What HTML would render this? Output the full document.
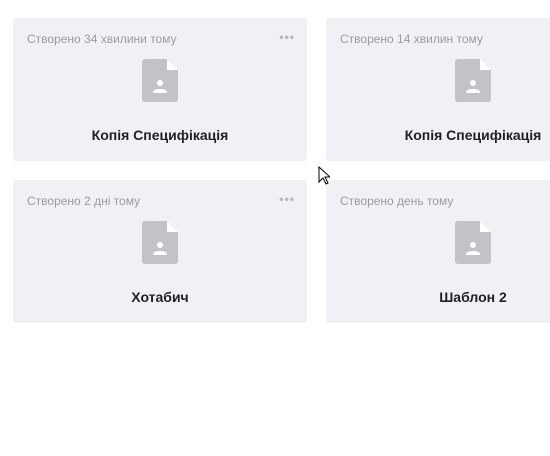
<!DOCTYPE html>
<html><head><meta charset="utf-8"><style>
body{margin:0;width:550px;height:456px;background:#fff;overflow:hidden;position:relative;font-family:"Liberation Sans",sans-serif}
.c{position:absolute;width:294px;height:143px;background:#f0f1f5;border-radius:3px}
.t{position:absolute;left:14px;top:14px;font-size:12px;color:#9a9ca3}
.d{position:absolute;right:12px;top:12px;font-size:12px;color:#b5b7bd;letter-spacing:1px;font-weight:bold}
.i{position:absolute;left:129px;top:41px}
.n{position:absolute;left:0;right:0;top:109px;text-align:center;font-size:14px;color:#1f2023;font-weight:bold}
</style></head><body>
<svg width="0" height="0" style="position:absolute"><defs><g id="f"><path d="M3 0H25L36 11V40a3 3 0 0 1-3 3H3a3 3 0 0 1-3-3V3a3 3 0 0 1 3-3Z" fill="#c1c3c9"/><path d="M25 0V11H36Z" fill="#fff"/><circle cx="18" cy="24" r="3" fill="#fff"/><path d="M11 33c0-4 14-4 14 0v1H11Z" fill="#fff"/></g></defs></svg>
<div class="c" style="left:13px;top:18px"><div class="t">Створено 34 хвилини тому</div><div class="d">•••</div><svg class="i" width="36" height="43"><use href="#f"/></svg><div class="n">Копія Специфікація</div></div>
<div class="c" style="left:326px;top:18px"><div class="t">Створено 14 хвилин тому</div><svg class="i" width="36" height="43"><use href="#f"/></svg><div class="n">Копія Специфікація</div></div>
<div class="c" style="left:13px;top:180px"><div class="t">Створено 2 дні тому</div><div class="d">•••</div><svg class="i" width="36" height="43"><use href="#f"/></svg><div class="n">Хотабич</div></div>
<div class="c" style="left:326px;top:180px"><div class="t">Створено день тому</div><svg class="i" width="36" height="43"><use href="#f"/></svg><div class="n">Шаблон 2</div></div>
<svg style="position:absolute;left:318px;top:166px" width="12" height="20"><path d="M1 1V16L5 12L8 18L10 17L7 11H12Z" fill="#fff" stroke="#000" stroke-width="1"/></svg>
</body></html>
